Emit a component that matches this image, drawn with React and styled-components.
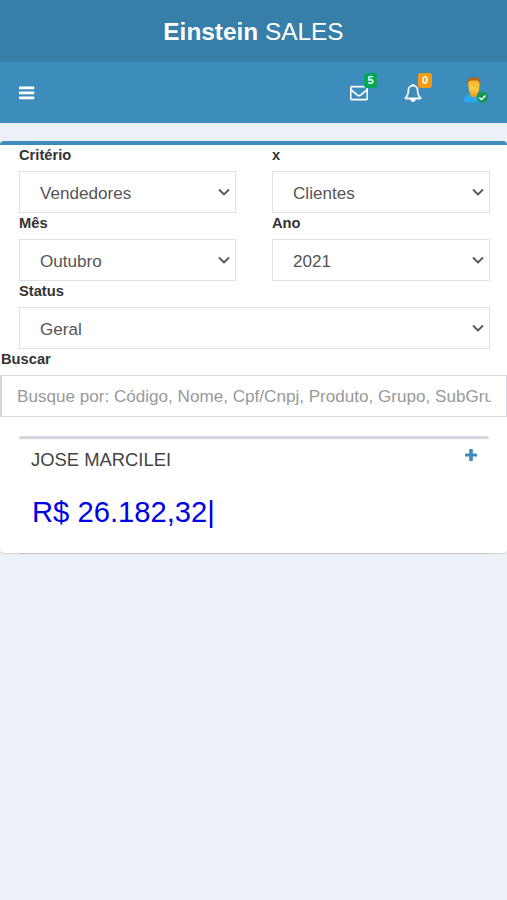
import React from 'react';
import styled, { createGlobalStyle } from 'styled-components';

const GlobalStyle = createGlobalStyle`
  *, *::before, *::after { box-sizing: border-box; }
  body {
    margin: 0;
    background: #ecf0f7;
    color: #333;
    font-family: "Liberation Sans", Arial, sans-serif;
  }
  select, input { font: inherit; }
`;

const Page = styled.div`
  min-height: 100vh;
  overflow: hidden;
`;

const Logo = styled.header`
  height: 62px;
  padding-top: 1px;
  display: flex;
  align-items: center;
  justify-content: center;
  background: #367fa9;
  color: #fff;
  font-size: 24.4px;
  line-height: 60px;
  white-space: pre;
`;

const Navbar = styled.nav`
  height: 61px;
  display: flex;
  align-items: center;
  justify-content: space-between;
  padding: 0 18px 0 19px;
  background: #3c8dbc;
`;

const MenuButton = styled.button`
  display: grid;
  padding: 0;
  border: 0;
  background: none;
  color: #fff;
`;

const Actions = styled.div`
  display: flex;
  align-items: center;
`;

const Action = styled.a`
  position: relative;
  display: grid;
  width: 18px;
  height: 18px;
  margin-right: ${(p) => p.$gap}px;
  color: #fff;
`;

const Badge = styled.span`
  position: absolute;
  top: -11px;
  left: 14px;
  width: ${(p) => p.$width}px;
  height: 15px;
  border-radius: 3px;
  background: ${(p) => p.$color};
  font-size: 11px;
  font-weight: 700;
  line-height: 15px;
  text-align: center;
`;

const Avatar = styled.a`
  display: grid;
  padding-bottom: 5px;
`;

const Panel = styled.main`
  margin-top: 18px;
  height: 412px;
  border-top: 4px solid #3c8dbc;
  border-radius: 4px;
  background: #fff;
  box-shadow: 0 1px 1px rgba(0, 0, 0, 0.12);
`;

const Filters = styled.div`
  display: grid;
  grid-template-columns: 217px 218px;
  column-gap: 36px;
  padding: 0 17px 0 19px;
`;

const Field = styled.label`
  display: flex;
  flex-direction: column;
  height: 68px;
  grid-column: ${(p) => (p.$wide ? '1 / -1' : 'auto')};
`;

const LabelText = styled.span`
  height: 26px;
  font-size: 14.7px;
  font-weight: 700;
  line-height: 20px;
`;

const SelectFrame = styled.span`
  display: grid;
  grid-template-columns: 1fr 17px;
  align-items: center;
  height: 42px;
  border: 1px solid #dfe1e4;

  svg {
    grid-area: 1 / 2;
    pointer-events: none;
  }
`;

const Select = styled.select`
  grid-area: 1 / 1 / 2 / 3;
  height: 40px;
  padding: 2px 30px 0 20px;
  border: 0;
  outline: 0;
  appearance: none;
  background: transparent;
  color: #555;
  font-size: 17.1px;
`;

const SearchField = styled(Field)`
  padding-top: 1px;
  height: 69px;

  ${LabelText} {
    height: 25px;
    padding-left: 1px;
    line-height: 18px;
  }
`;

const SearchInput = styled.input`
  width: 100%;
  height: 42px;
  padding: 2px 15px 0;
  border: 1px solid #d6dae0;
  border-left: 2px solid #d3d4e4;
  border-radius: 0;
  outline: 0;
  background: #fff;
  color: #555;
  font-size: 17.1px;

  &::placeholder { color: #999; opacity: 1; }
`;

const SellerCard = styled.section`
  height: 117px;
  margin: 18px 18px 0 19px;
  border-top: 3px solid #d2d6de;
  border-radius: 3px;
  box-shadow: 0 1px 1px rgba(0, 0, 0, 0.1);
`;

const CardHeader = styled.div`
  display: flex;
  justify-content: space-between;
  padding: 9px 12px 0;
`;

const SellerName = styled.h3`
  margin: 0;
  color: #444;
  font-size: 18.4px;
  font-weight: 400;
  line-height: 23px;
`;

const ExpandButton = styled.button`
  display: grid;
  align-self: start;
  padding: 1px 0 0;
  border: 0;
  background: none;
  color: #3c8dbc;
`;

const Amount = styled.div`
  padding: 23px 12px 0 13px;
  color: #0000e6;
  font-size: 29.2px;
  line-height: 36px;
`;

const ENVELOPE =
  'M1664 1504v-768q-32 36-69 66-268 206-426 338-51 43-83 67t-86.500 48.500-102.500 24.500h-2q-48 0-102.500-24.500t-86.500-48.500-83-67q-158-132-426-338-37-30-69-66v768q0 13 9.500 22.500t22.500 9.500h1472q13 0 22.500-9.500t9.500-22.500zm0-1051v-24.500l-.5-13-3-12.500-5.500-9-9-7.500-14-2.500h-1472q-13 0-22.500 9.500t-9.500 22.500q0 168 147 284 193 152 401 317 6 5 35 29.500t46 37.500 44.500 31.500 50.500 27.500 43 9h2q20 0 43-9t50.500-27.500 44.500-31.500 46-37.500 35-29.500q208-165 401-317 54-43 100.500-115.500t46.500-131.500zm128-37v1088q0 66-47 113t-113 47h-1472q-66 0-113-47t-47-113v-1088q0-66 47-113t113-47h1472q66 0 113 47t47 113z';
const BELL =
  'M912 1696q0-16-16-16-59 0-101.500-42.500t-42.500-101.500q0-16-16-16t-16 16q0 73 51.500 124.500t124.500 51.500q16 0 16-16zm-666-288h1300q-266-300-266-832 0-51-24-105t-69-103-121.500-80.500-169.500-31.500-169.500 31.500-121.500 80.500-69 103-24 105q0 532-266 832zm1482 0q0 52-38 90t-90 38h-448q0 106-75 181t-181 75-181-75-75-181h-448q-52 0-90-38t-38-90q50-42 91-88t85-119.500 74.500-158.500 50-206 19.500-260q0-152 117-282.500t307-158.500q-8-19-8-39 0-40 28-68t68-28 68 28 28 68q0 20-8 39 190 28 307 158.500t117 282.500q0 139 19.500 260t50 206 74.500 158.500 85 119.500 91 88z';

const Glyph = ({ d, y = 0 }) => (
  <svg
    width="18"
    height="18"
    viewBox={`0 ${y} 1792 1792`}
    fill="currentColor"
    stroke="currentColor"
    strokeWidth="45"
  >
    <path d={d} />
  </svg>
);

const MenuIcon = () => (
  <svg width="16" height="14" viewBox="0 0 16 14" fill="currentColor">
    <rect y="0.5" width="15.3" height="2.7" rx="0.5" />
    <rect y="5.5" width="15.3" height="2.7" rx="0.5" />
    <rect y="10.5" width="15.3" height="2.7" rx="0.5" />
  </svg>
);

const Chevron = () => (
  <svg width="12" height="8" viewBox="0 0 12 8" fill="none" stroke="#555" strokeWidth="1.8">
    <path d="M1 1.500 6 6.500 11 1.500" />
  </svg>
);

const PlusIcon = () => (
  <svg width="12" height="12" viewBox="0 0 12 12" fill="currentColor">
    <path d="M4.8 0h2.4q.6 0 .6.6v3.8h3.6q.6 0 .6.6v2q0 .6-.6.6H7.8v3.8q0 .6-.6.6H4.8q-.6 0-.6-.6V7.600H.6Q0 7.600 0 7V5q0-.6.6-.6h3.600V.6q0-.6.6-.6Z" />
  </svg>
);

const UserIcon = () => (
  <svg width="26" height="28" viewBox="0 0 26 28">
    <defs>
      <linearGradient id="face" x1="0" x2="0" y1="0" y2="1">
        <stop offset="0" stopColor="#f7b52e" />
        <stop offset=".55" stopColor="#ffca3c" />
        <stop offset="1" stopColor="#e8a01c" />
      </linearGradient>
    </defs>
    <path d="M.5 26q0-6 5.500-7.400l5-1.300 5.500 1.500V26q-8 1.200-16 0Z" fill="#28a8ea" />
    <path d="M7.500 15.500h7v4l-3.300 2.600-3.700-2.600Z" fill="#dda12a" />
    <path d="M4.600 8.500Q3.200 1 10.700 1q8 0 6.500 8Z" fill="#b5641c" />
    <path d="M5.300 6.800Q6.800 4.600 8 4.500h6q1.800.5 2.500 2.500.2 2-.2 4-.5 6.500-3 8.500-2.300 1.500-4.500 0-2.800-2.500-3.200-8.500-.6-2-.3-4.200Z" fill="url(#face)" />
    <circle cx="19.400" cy="21.300" r="5.700" fill="#16965a" />
    <path d="m16.300 21.500 2.200 2 4-4" fill="none" stroke="#fff" strokeWidth="1.600" />
  </svg>
);

const fields = [
  { label: 'Critério', value: 'Vendedores' },
  { label: 'x', value: 'Clientes' },
  { label: 'Mês', value: 'Outubro' },
  { label: 'Ano', value: '2021' },
  { label: 'Status', value: 'Geral', wide: true },
];

export default function App() {
  return (
    <Page>
      <GlobalStyle />
      <Logo><b>Einstein</b> SALES</Logo>
      <Navbar>
        <MenuButton aria-label="Menu"><MenuIcon /></MenuButton>
        <Actions>
          <Action $gap={36}>
            <Glyph d={ENVELOPE} y={50} />
            <Badge $color="#00a65a" $width={13}>5</Badge>
          </Action>
          <Action $gap={41}>
            <Glyph d={BELL} y={30} />
            <Badge $color="#f39c12" $width={14}>0</Badge>
          </Action>
          <Avatar><UserIcon /></Avatar>
        </Actions>
      </Navbar>
      <Panel>
        <Filters>
          {fields.map(({ label, value, wide }) => (
            <Field key={label} $wide={wide}>
              <LabelText>{label}</LabelText>
              <SelectFrame>
                <Select defaultValue={value}><option>{value}</option></Select>
                <Chevron />
              </SelectFrame>
            </Field>
          ))}
        </Filters>
        <SearchField>
          <LabelText>Buscar</LabelText>
          <SearchInput placeholder="Busque por: Código, Nome, Cpf/Cnpj, Produto, Grupo, SubGrupo" />
        </SearchField>
        <SellerCard>
          <CardHeader>
            <SellerName>JOSE MARCILEI</SellerName>
            <ExpandButton aria-label="Expandir"><PlusIcon /></ExpandButton>
          </CardHeader>
          <Amount>R$ 26.182,32|</Amount>
        </SellerCard>
      </Panel>
    </Page>
  );
}
